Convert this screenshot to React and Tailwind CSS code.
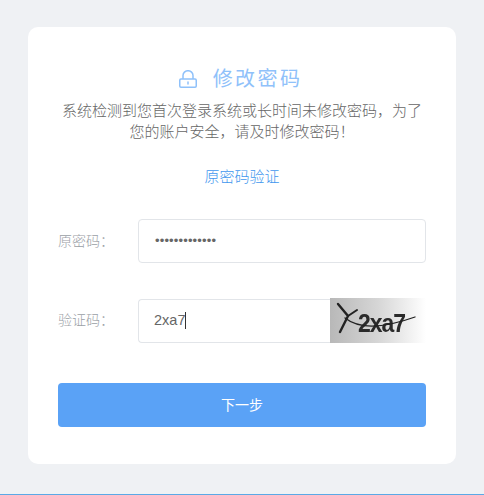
const font = { fontFamily: '"Liberation Sans", "Noto Sans CJK SC", sans-serif' };

function LockIcon() {
  return (
    <svg width="18" height="18" viewBox="0 0 18 18" fill="none" stroke="#8fc1fa" strokeWidth="1.5">
      <path d="M4 9V5.5a5 4.8 0 0 1 10 0V9" />
      <rect x="0.75" y="9" width="16.5" height="8.25" rx="1.2" />
      <path d="M9 12v2" strokeLinecap="round" />
    </svg>
  );
}

function Captcha() {
  return (
    <div className="relative w-[96px] h-[45px] shrink-0 overflow-hidden bg-gradient-to-r from-[#b8b8b8] via-[#d6d6d6] to-[#ffffff]">
      <span className="absolute left-[28px] top-[10px] text-[23px] font-bold leading-[30px] text-[#2a2a2a] tracking-[-1px] scale-y-[1.15] blur-[0.6px]">
        2xa7
      </span>
      <svg className="absolute inset-0 blur-[0.3px]" width="96" height="45" viewBox="0 0 96 45" fill="none" stroke="#222" strokeLinecap="round">
        <path d="M8 6 L18 18 L10 34" strokeWidth="2.4" />
        <path d="M18 18 L27 12" strokeWidth="2" />
        <path d="M15 20 C 30 32, 57 29, 85 19" strokeWidth="1.3" />
      </svg>
    </div>
  );
}

export default function App() {
  return (
    <div style={font} className="h-[495px] bg-[#eff1f4] pt-[27px] px-[28px] border-b border-[#5aa9e6] overflow-hidden">
      <div className="h-[437px] bg-white rounded-[10px] px-[30px] pt-[37px]">
        <div className="flex items-center justify-center gap-[16px] h-[30px] -ml-[3px]">
          <LockIcon />
          <h1 className="text-[20px] font-normal text-[#8fc1fa] tracking-[2.4px] leading-[30px]">修改密码</h1>
        </div>
        <p className="mt-[6px] -mx-[10px] text-[15px] font-light leading-[21px] text-[#666666] text-center">
          系统检测到您首次登录系统或长时间未修改密码，为了
          <br />
          您的账户安全，请及时修改密码！
        </p>
        <div className="mt-[24px] text-[15px] font-light leading-[22px] text-[#3f97ee] text-center">原密码验证</div>

        <div className="mt-[31px] flex items-center">
          <label className="w-[80px] text-[14px] font-light text-[#9aa0a6]">原密码：</label>
          <div className="flex-1 h-[44px] border border-[#e2e5e9] rounded-[4px] px-[16px] flex items-center text-[#666] text-[13px] tracking-[0.15px]">
            •••••••••••••
          </div>
        </div>

        <div className="mt-[35px] flex items-center">
          <label className="w-[80px] text-[14px] font-light text-[#9aa0a6]">验证码：</label>
          <div className="w-[192px] h-[44px] border border-r-0 border-[#e2e5e9] rounded-l-[4px] px-[15px] flex items-center text-[14.5px] text-[#666]">
            2xa7<span className="w-px h-[17px] bg-[#333]"></span>
          </div>
          <Captcha />
        </div>

        <button className="mt-[40px] w-full h-[44px] bg-[#5aa2f6] rounded-[4px] text-white text-[14px]">下一步</button>
      </div>
    </div>
  );
}
